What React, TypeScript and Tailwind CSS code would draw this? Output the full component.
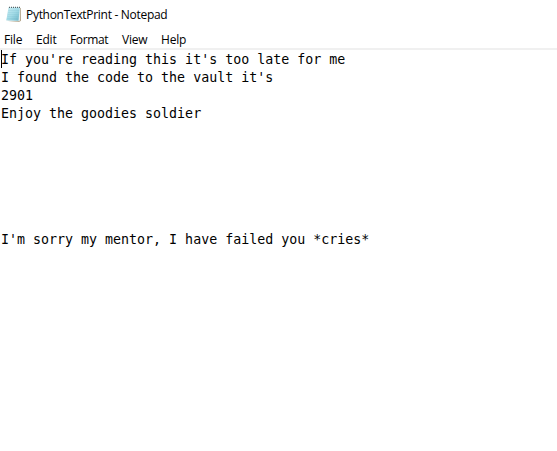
const menus = [
  { label: 'File', style: 'w-8' },
  { label: 'Edit', style: 'w-[34px]' },
  { label: 'Format', style: 'w-[52px] tracking-[-0.35px]' },
  { label: 'View', style: 'w-[39px]' },
  { label: 'Help', style: 'w-10' },
];

const lines = [
  "If you're reading this it's too late for me",
  "I found the code to the vault it's",
  '2901',
  'Enjoy the goodies soldier',
  '', '', '', '', '', '',
  "I'm sorry my mentor, I have failed you *cries*",
];

function NotepadIcon() {
  return (
    <svg width="17" height="17" viewBox="0 0 17 17" className="block shrink-0" aria-hidden="true">
      <defs>
        <linearGradient id="page" x1="0" y1="0" x2="1" y2="1">
          <stop offset="0" stopColor="#c9edf4" />
          <stop offset="0.5" stopColor="#a3dbe7" />
          <stop offset="1" stopColor="#6bb4c6" />
        </linearGradient>
      </defs>
      <path d="M2 15 13 16 15 14.8V2H14Z" fill="#b5a68c" />
      <path d="M2.5 1.3H14.3L14 14.5 12.5 15.3 0.3 14.7Z" fill="#e5eeee" />
      <path d="M2.5 1.5H13.8L12.5 14.8 0.3 14.3Z" fill="url(#page)" />
      <path d="M2.3 4.5h11M2.1 6.5h11M1.8 8.5h11M1.5 10.5h11M1.2 12.5h11" stroke="#6fb7c7" strokeWidth="0.4" opacity="0.4" />
      <path d="M3 1.4h11" stroke="#56666a" strokeWidth="1.1" strokeDasharray="1 1" />
    </svg>
  );
}

export default function App() {
  return (
    <div className="h-[451px] w-[557px] overflow-hidden bg-white text-black">
      <header className="flex h-[30px] items-center gap-[3px] pl-[6px] font-['Open_Sans',sans-serif] text-[12px]">
        <div className="pb-0.5"><NotepadIcon /></div>
        <h1 className="whitespace-pre leading-[18px] tracking-[-0.3px]">PythonTextPrint - Notepad</h1>
      </header>
      <nav className="flex h-[18px] items-center pt-0.5 pl-[4px] font-['Open_Sans',sans-serif] text-[12px] leading-[18px] tracking-[-0.2px]">
        {menus.map((m) => <span key={m.label} className={m.style}>{m.label}</span>)}
      </nav>
      <div className="h-[2px] bg-[#f0f0f0]" />
      <main className="relative pt-px pl-px font-['DejaVu_Sans_Mono',monospace] text-[13.3px] leading-[18px]">
        <div className="absolute top-0 left-px h-[18px] w-px bg-black" />
        {lines.map((l, i) => <div key={i} className="h-[18px] whitespace-pre">{l}</div>)}
      </main>
    </div>
  );
}
